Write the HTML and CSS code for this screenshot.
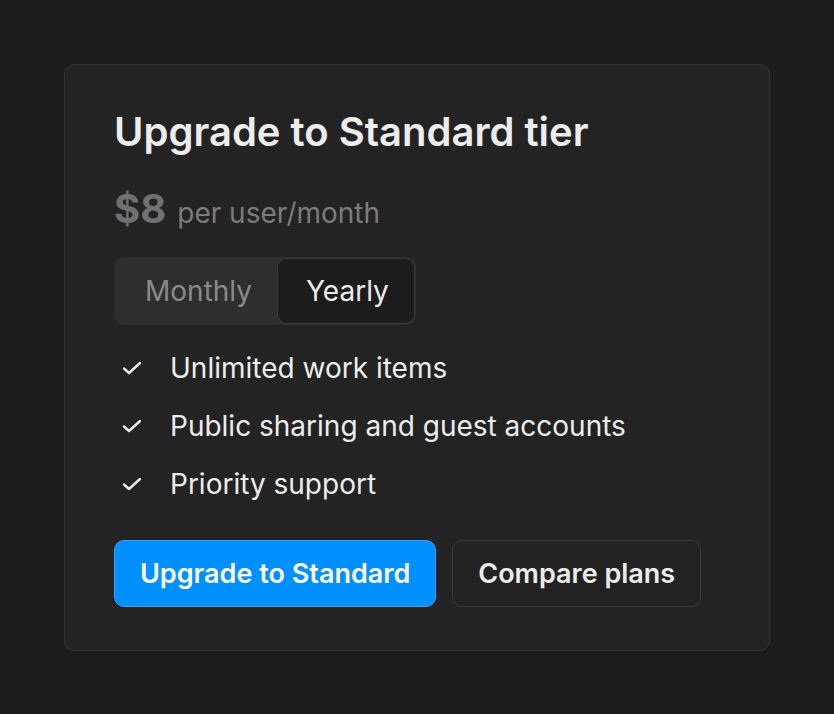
FILE: index.html
```html
<!DOCTYPE html>
<html lang="en">
  <head>
    <meta charset="UTF-8" />
    <meta name="viewport" content="width=device-width, initial-scale=1.0" />
    <title>Upgrade</title>
    <link rel="stylesheet" href="styles.css">
  </head>

  <body>
    <div class="card">
      <h1 class="title">Upgrade to Standard tier</h1>

      <div class="price">
        <span class="amount">$8</span>
        <span class="unit">per user/month</span>
      </div>

      <div class="toggle">
        <div class="option">Monthly</div>
        <div class="option selected">Yearly</div>
      </div>

      <ul class="features">
        <li class="feature">
          <svg class="check" viewBox="0 0 20 14" width="20" height="14">
            <path d="M2 7.5 L7 12 L18 2" />
          </svg>
          Unlimited work items
        </li>
        <li class="feature">
          <svg class="check" viewBox="0 0 20 14" width="20" height="14">
            <path d="M2 7.5 L7 12 L18 2" />
          </svg>
          Public sharing and guest accounts
        </li>
        <li class="feature">
          <svg class="check" viewBox="0 0 20 14" width="20" height="14">
            <path d="M2 7.5 L7 12 L18 2" />
          </svg>
          Priority support
        </li>
      </ul>

      <div class="actions">
        <button class="button primary">Upgrade to Standard</button>
        <button class="button secondary">Compare plans</button>
      </div>
    </div>
  </body>
</html>
```

FILE: styles.css
```css
*,
*::before,
*::after {
  box-sizing: border-box;
}

body {
  background-color: #1c1c1c;
  margin: 0;
  padding: 64px;
  font-family: Inter, "Noto Sans", sans-serif;
  color: #ededed;
}

.card {
  background-color: #232323;
  border: 1px solid #333;
  border-radius: 10px;
  padding: 44px 49px 43px 49px;
}

.title {
  margin: 0;
  font-size: 40px;
  font-weight: 600;
  line-height: 46px;
  color: #ededed;
}

.price {
  display: flex;
  align-items: baseline;
  gap: 11px;
  margin-top: 29px;
}

.amount {
  font-size: 40px;
  font-weight: 700;
  color: #707070;
}

.unit {
  font-size: 28px;
  color: #7c7c7c;
}

.toggle {
  display: inline-flex;
  margin-top: 24px;
  background-color: #2e2e2e;
  border-radius: 10px;
}

.option {
  padding: 0 24px 0 31px;
  height: 68px;
  display: flex;
  align-items: center;
  font-size: 28px;
  color: #8a8a8a;
}

.option.selected {
  background-color: #1c1c1c;
  border: 1px solid #393939;
  border-radius: 10px;
  margin: 1px;
  height: 66px;
  padding: 0 25px 0 28px;
  color: #ededed;
}

.features {
  list-style: none;
  margin: 14px 0 0;
  padding: 0;
}

.feature {
  display: flex;
  align-items: center;
  gap: 28px;
  height: 58px;
  padding-left: 8px;
  font-size: 28px;
}

.check {
  fill: none;
  stroke: #ededed;
  stroke-width: 2.4;
  stroke-linecap: round;
  stroke-linejoin: round;
}

.actions {
  display: flex;
  gap: 16px;
  margin-top: 27px;
}

.button {
  height: 67px;
  padding: 0 25px;
  border-radius: 10px;
  font-family: inherit;
  font-size: 27px;
  font-weight: 600;
}

.primary {
  background-color: #0090ff;
  border: 1px solid #3b9eff;
  color: #fff;
}

.secondary {
  background-color: #222;
  border: 1px solid #3a3a3a;
  color: #ededed;
}
```
